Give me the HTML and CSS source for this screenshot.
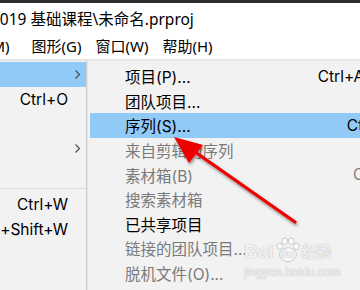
FILE: index.html
```html
<!DOCTYPE html>
<html lang="zh-CN">
<head>
    <meta charset="UTF-8">
    <title>Premiere 文件菜单</title>
    <link rel="stylesheet" href="styles.css">
</head>
<body>

<div class="top-strip"></div>
<div class="title-bar"><span class="title-text">2019 基础课程\未命名.prproj</span></div>
<div class="menu-bar">
    <span class="menu-item cut">标记(M)</span>
    <span class="menu-item">图形(G)</span>
    <span class="menu-item">窗口(W)</span>
    <span class="menu-item">帮助(H)</span>
</div>

<div class="menus">
    <div class="file-menu">
        <div class="row active"><span class="key"></span><span class="chev"><svg width="5" height="9" viewBox="0 0 5 9"><polyline points="0.5,0.5 4.5,4.5 0.5,8.5" fill="none" stroke="#444" stroke-width="1.1"/></svg></span></div>
        <div class="row"><span class="key">Ctrl+O</span><span class="chev"></span></div>
        <div class="row"><span class="key"></span><span class="chev"></span></div>
        <div class="row"><span class="key"></span><span class="chev"><svg width="5" height="9" viewBox="0 0 5 9"><polyline points="0.5,0.5 4.5,4.5 0.5,8.5" fill="none" stroke="#444" stroke-width="1.1"/></svg></span></div>
        <div class="row"><span class="key"></span><span class="chev"></span></div>
        <div class="sep"></div>
        <div class="row"><span class="key">Ctrl+W</span><span class="chev"></span></div>
        <div class="row"><span class="key">Ctrl+Shift+W</span><span class="chev"></span></div>
    </div>

    <div class="sub-menu">
        <div class="item"><span class="label">项目(P)...</span><span class="shortcut">Ctrl+Alt+N</span></div>
        <div class="item"><span class="label">团队项目...</span><span class="shortcut"></span></div>
        <div class="item active"><span class="label">序列(S)...</span><span class="shortcut">Ctrl+N</span></div>
        <div class="item off"><span class="label">来自剪辑的序列</span><span class="shortcut"></span></div>
        <div class="item off"><span class="label">素材箱(B)</span><span class="shortcut">Ctrl+/</span></div>
        <div class="item off"><span class="label">搜索素材箱</span><span class="shortcut"></span></div>
        <div class="item"><span class="label">已共享项目</span><span class="shortcut"></span></div>
        <div class="item off"><span class="label">链接的团队项目...</span><span class="shortcut"></span></div>
        <div class="item off"><span class="label">脱机文件(O)...</span><span class="shortcut"></span></div>
    </div>
</div>

<!-- watermark + red arrow lie over the menus -->
<div class="watermark">
    <div class="wm-logo">
        <span>Bai</span>
        <span class="wm-paw">
            <svg width="26" height="26" viewBox="0 0 28 28">
                <g fill="rgba(255,255,255,0.75)" stroke="#c4c4c4" stroke-width="1">
                    <ellipse cx="5" cy="10" rx="3" ry="3.5"/>
                    <ellipse cx="10.5" cy="4.5" rx="3" ry="3.5"/>
                    <ellipse cx="17.5" cy="4.5" rx="3" ry="3.5"/>
                    <ellipse cx="23" cy="10" rx="3" ry="3.5"/>
                    <ellipse cx="14" cy="19" rx="9" ry="7.5"/>
                </g>
            </svg>
            <span class="wm-du">du</span>
        </span>
        <span class="wm-cn">经验</span>
    </div>
    <div class="wm-url">jingyan.baidu.com</div>
</div>

<svg class="arrow" width="360" height="290" viewBox="0 0 360 290">
    <defs>
        <filter id="shadow" x="-20%" y="-20%" width="140%" height="140%">
            <feDropShadow dx="1" dy="2" stdDeviation="1.5" flood-color="#000" flood-opacity="0.45"/>
        </filter>
    </defs>
    <g filter="url(#shadow)">
        <line x1="295" y1="222" x2="188" y2="147" stroke="#ee0000" stroke-width="3.2" stroke-linecap="round"/>
        <polygon points="174,137 203,145 189,163" fill="#ee0000"/>
    </g>
</svg>

</body>
</html>
```

FILE: styles.css
```css
body {
    margin: 0;
    width: 360px;
    height: 290px;
    overflow: hidden;
    position: relative;
    background-color: #fff;
    font-family: Inter, "Noto Sans CJK SC", sans-serif;
    font-size: 15.5px;
    color: #000;
}
.top-strip {
    height: 3px;
    background-color: #2e2e2e;
}
.title-bar {
    height: 29px;
    line-height: 33px;
    white-space: nowrap;
    font-family: "Noto Sans", "Noto Sans CJK SC", sans-serif;
    font-size: 15.5px;
}
.title-text {
    margin-left: -9px;
}
.menu-bar {
    height: 27px;
    display: flex;
    align-items: center;
    white-space: nowrap;
    font-family: "Noto Sans", "Noto Sans CJK SC", sans-serif;
    font-size: 15px;
    border-bottom: 2px solid #e6e6e6;
}
.menu-item {
    margin-right: 14px;
}
.menu-item.cut {
    margin-left: -43px;
    margin-right: 22px;
}
.menus {
    display: flex;
    height: 229px;
}
.file-menu {
    width: 86px;
    flex-shrink: 0;
    padding-top: 1px;
    overflow: hidden;
    background-color: #f2f2f2;
    border-right: 1px solid #cfcfcf;
}
.row {
    height: 24.8px;
    display: grid;
    grid-template-columns: minmax(0, 1fr) 18px;
    align-items: center;
    white-space: nowrap;
}
.row.active {
    background-color: #91c9f7;
}
.key {
    display: flex;
    justify-content: flex-end;
    overflow: visible;
}
.chev {
    display: flex;
    justify-content: center;
    padding-left: 1px;
}
.sep {
    height: 6px;
    display: flex;
    align-items: center;
}
.sep::after {
    content: "";
    flex: 1;
    height: 1px;
    background-color: #dcdcdc;
}
.sub-menu {
    width: 330px;
    flex-shrink: 0;
    padding: 3px 0 0 2px;
    background-color: #f2f2f2;
    border-left: 1px solid #e4e4e4;
}
.item {
    height: 24.6px;
    display: flex;
    align-items: center;
    justify-content: space-between;
    padding: 0 25px 0 35px;
    white-space: nowrap;
}
.item.active {
    background-color: #91c9f7;
}
.item.off {
    color: #7a7a7a;
}
.watermark {
    position: absolute;
    left: 244px;
    top: 233px;
    color: rgba(255, 255, 255, 0.8);
    text-shadow: 0 0 1px #bdbdbd, 0 0 1px #bdbdbd;
    white-space: nowrap;
}
.wm-logo {
    display: flex;
    align-items: flex-end;
    font-family: "Liberation Sans", sans-serif;
    font-size: 19px;
    font-weight: bold;
    height: 30px;
}
.wm-paw {
    position: relative;
    width: 26px;
    height: 26px;
    margin: 0 1px;
}
.wm-du {
    position: absolute;
    left: 5px;
    top: 10px;
    font-size: 12px;
}
.wm-cn {
    font-family: "Noto Sans CJK SC", sans-serif;
    font-size: 15px;
    line-height: 24px;
}
.wm-url {
    font-family: "Liberation Sans", sans-serif;
    font-size: 12px;
    margin-top: 2px;
}
.arrow {
    position: absolute;
    left: 0;
    top: 0;
}
```
